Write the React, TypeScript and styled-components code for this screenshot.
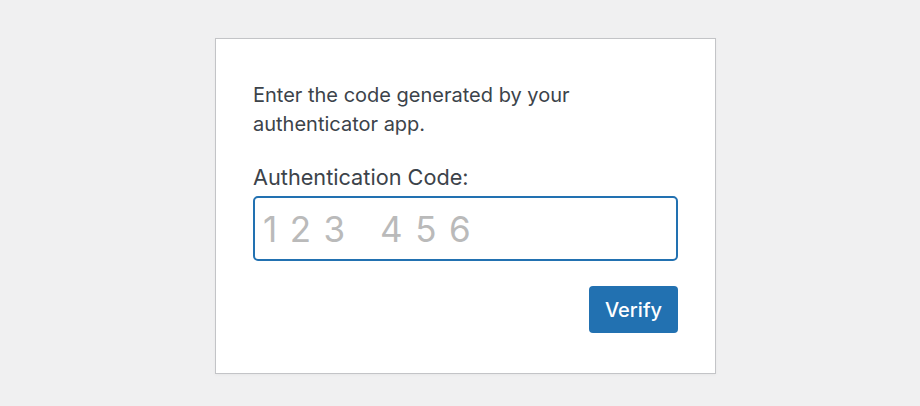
import React from "react";
import styled, { createGlobalStyle } from "styled-components";

const GlobalStyle = createGlobalStyle`
  html, body {
    margin: 0;
    padding: 0;
    background: #f0f0f1;
  }
  body {
    font-family: Inter, "Liberation Sans", Arial, sans-serif;
    color: #3c434a;
  }
  * { box-sizing: border-box; }
`;

const Page = styled.div`
  width: 920px;
  height: 406px;
  padding: 38px 0 0 215px;
  background: #f0f0f1;
`;

const Card = styled.form`
  width: 501px;
  background: #fff;
  border: 1px solid #c3c4c7;
  box-shadow: 0 1px 3px rgba(0, 0, 0, 0.04);
  padding: 42px 37px 40px 37px;
  display: flex;
  flex-direction: column;
`;

const Prompt = styled.p`
  margin: 0 0 24px;
  font-size: 20px;
  line-height: 29px;
  color: #3c434a;
  max-width: 340px;
`;

const Label = styled.label`
  display: block;
  font-size: 21.7px;
  line-height: 29px;
  color: #3c434a;
  margin-bottom: 4px;
`;

const CodeInput = styled.input`
  width: 100%;
  height: 65px;
  border: 2px solid #2271b1;
  border-radius: 5px;
  padding: 0 8px;
  font-family: inherit;
  font-size: 35px;
  letter-spacing: 12.5px;
  color: #2c3338;
  background: #fff;
  outline: none;
  &::placeholder {
    color: #bababa;
    opacity: 1;
  }
`;

const Actions = styled.div`
  display: flex;
  justify-content: flex-end;
  margin-top: 25px;
`;

const PrimaryButton = styled.button`
  width: 89px;
  height: 47px;
  border: none;
  border-radius: 4px;
  background: #2271b1;
  color: #fff;
  font-family: inherit;
  font-size: 20px;
  font-weight: 500;
  cursor: pointer;
`;

export default function App() {
  return (
    <>
      <GlobalStyle />
      <Page>
        <Card onSubmit={(e) => e.preventDefault()}>
          <Prompt>Enter the code generated by your authenticator app.</Prompt>
          <Label htmlFor="authcode">Authentication Code:</Label>
          <CodeInput id="authcode" type="text" placeholder="123 456" autoComplete="one-time-code" />
          <Actions>
            <PrimaryButton type="submit">Verify</PrimaryButton>
          </Actions>
        </Card>
      </Page>
    </>
  );
}
